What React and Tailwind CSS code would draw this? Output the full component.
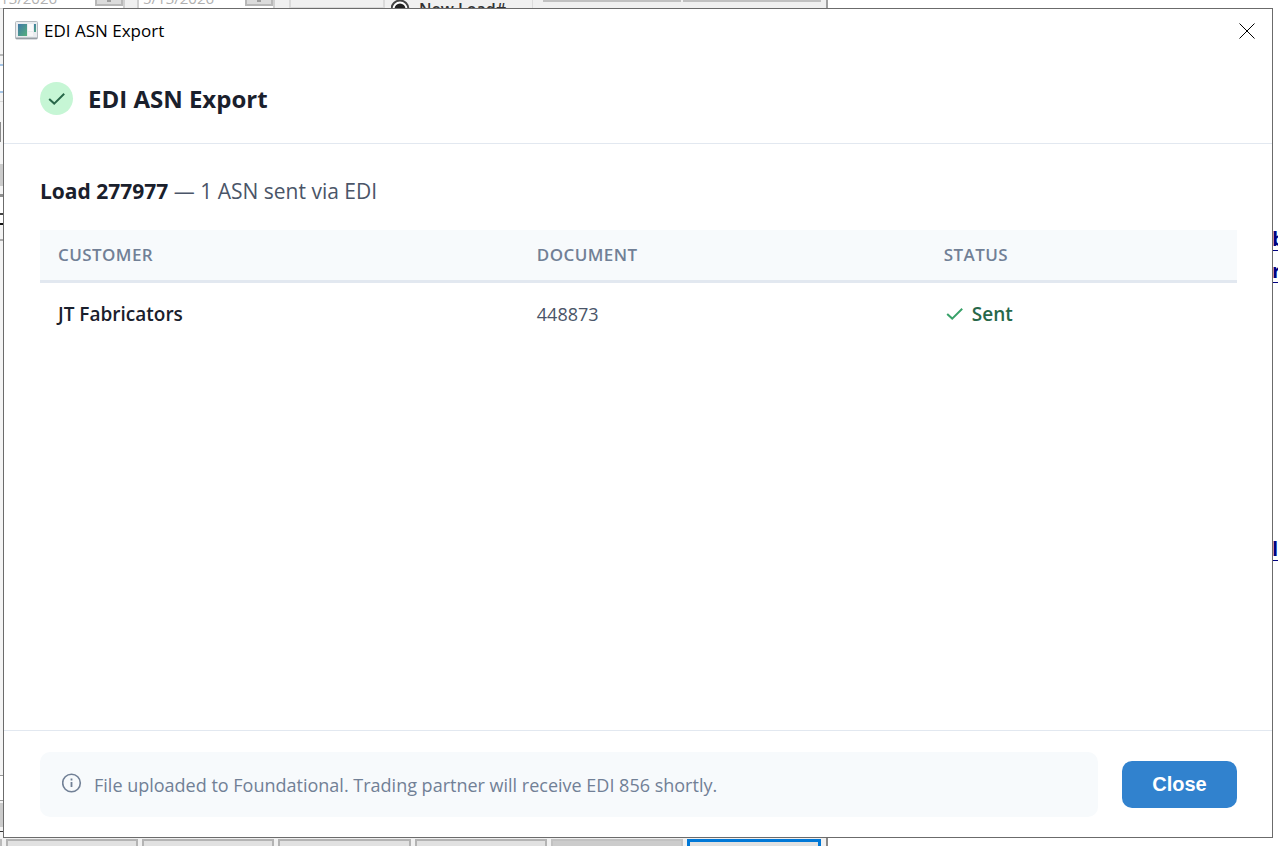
const rows = [{ customer: "JT Fabricators", document: "448873", status: "Sent" }];

function CheckIcon({ className }) {
  return (
    <svg className={className} viewBox="0 0 18 14" fill="none" stroke="currentColor" aria-hidden="true">
      <path d="M1.2 7 6.2 11.6 16.2 1.8" />
    </svg>
  );
}

function WindowIcon() {
  return (
    <svg className="h-5 w-6 shrink-0" viewBox="0 0 24 20" aria-hidden="true">
      <defs>
        <linearGradient id="pane" x1="0" y1="0" x2="1" y2="1">
          <stop offset="0" stopColor="#3f78a8" />
          <stop offset="1" stopColor="#55b07c" />
        </linearGradient>
      </defs>
      <rect x="0.5" y="0.5" width="22" height="17.5" rx="1" fill="#e9ecef" stroke="#b4babf" />
      <rect x="1" y="16.5" width="21" height="1.5" fill="#989fa5" />
      <rect x="3" y="3" width="9" height="12" fill="url(#pane)" />
      <rect x="13" y="3" width="5" height="7" fill="#fafafa" />
      <rect x="13" y="11" width="5" height="4" fill="#f6f6f6" />
      <rect x="19" y="3" width="2" height="8" fill="url(#pane)" />
    </svg>
  );
}

function DateField({ value, className }) {
  return (
    <div className={`flex h-[9px] shrink-0 items-start justify-between border-x-2 border-b border-[#d0d0d0] bg-white ${className}`}>
      <span className="-mt-3 pl-1 text-[15px] leading-5 text-[#b0b0b0]">{value}</span>
      <span className="flex h-1.5 w-7 items-start justify-center border-x-2 border-b-2 border-[#b8b8b8] bg-[#dcdcdc]">
        <span className="h-0.5 w-1 bg-[#a0a0a0]" />
      </span>
    </div>
  );
}

function ParentWindow() {
  return (
    <div className="absolute inset-0 flex flex-col overflow-hidden bg-white" aria-hidden="true">
      <div className="flex h-[9px] w-[828px] shrink-0 items-start overflow-hidden border-r-2 border-[#a0a0a0] bg-[#f0f0f0]">
        <DateField value="5/13/2026" className="-ml-5 w-[145px]" />
        <DateField value="5/13/2026" className="ml-3 w-[138px]" />
        <div className="ml-3.5 h-2 w-24 shrink-0 border-x-2 border-b border-[#dadada]" />
        <svg className="ml-1.5 h-[9px] w-5 shrink-0" viewBox="0 0 20 9">
          <circle cx="9" cy="9" r="8.5" fill="#fff" stroke="#444" strokeWidth="2" />
          <circle cx="9" cy="9" r="5.5" fill="#222" />
        </svg>
        <span className="ml-2 w-[114px] shrink-0 border-r border-[#dcdcdc] text-base leading-[18px] font-semibold text-[#333]">New Load#</span>
        <div className="ml-2.5 h-0.5 w-[138px] shrink-0 bg-[#c0c0c0]" />
        <div className="ml-0.5 h-0.5 w-[138px] shrink-0 bg-[#c0c0c0]" />
      </div>
      <div className="flex min-h-0 flex-1 justify-between">
        <div className="flex w-1 flex-col bg-[#f4f4f4]">
          <div className="mt-[45px] h-0.5 bg-[#b8b8b8]" />
          <div className="mt-2 h-[29px] border-y-2 border-[#a5c5e6] bg-white" />
          <div className="mt-2 h-px bg-[#d8d8d8]" />
          <div className="mt-5 h-5 w-px bg-[#8a8a8a]" />
          <div className="mt-[22px] h-[22px] bg-[#cbcbcb]" />
          <div className="mt-2 h-[3px] bg-[#8f8f8f]" />
          <div className="h-4 bg-white" />
          <div className="h-0.5 bg-[#444]" />
          <div className="h-2 bg-white" />
          <div className="h-0.5 bg-[#111]" />
          <div className="mt-3.5 h-0.5 bg-[#aaa]" />
          <div className="flex-1" />
          <div className="h-px bg-[#999]" />
          <div className="h-6 bg-white" />
          <div className="h-px bg-[#999]" />
          <div className="mt-0.5 h-6 bg-[#cbcbcb]" />
          <div className="mt-1 mb-1.5 h-px bg-[#333]" />
        </div>
        <div className="flex w-1.5 flex-col pt-[214px] text-xl leading-8 font-bold text-[#000080] underline decoration-1 underline-offset-4">
          <span className="h-8">b</span>
          <span className="h-8">r</span>
          <span className="mt-[246px] h-8">l</span>
        </div>
      </div>
      <div className="flex h-2 w-[828px] shrink-0 items-stretch gap-1 overflow-hidden border-r-2 border-[#888] bg-[#f0f0f0] pt-px pr-[5px]">
        <div className="w-0.5 bg-[#bbb]" />
        <div className="flex-1 border-2 border-b-0 border-[#b3b3b3] bg-[#e1e1e1]" />
        <div className="flex-1 border-2 border-b-0 border-[#b3b3b3] bg-[#e1e1e1]" />
        <div className="flex-1 border-2 border-b-0 border-[#b3b3b3] bg-[#e1e1e1]" />
        <div className="flex-1 border-2 border-b-0 border-[#b3b3b3] bg-[#e1e1e1]" />
        <div className="flex-1 border-2 border-b-0 border-[#c2c2c2] bg-[#cccccc]" />
        <div className="flex-1 border-3 border-b-0 border-[#0078d7] bg-[#e1e1e1]" />
      </div>
    </div>
  );
}

export default function App() {
  return (
    <div className="relative flex min-h-screen bg-white py-2 pr-[5px] pl-[3px] font-['Open_Sans','Noto_Sans',sans-serif]">
      <ParentWindow />
      <section role="dialog" aria-labelledby="dialog-title" className="relative flex min-w-0 flex-1 flex-col border border-[#6b6b6b] bg-white">
        <div className="flex h-[45px] shrink-0 items-center justify-between pr-[17px] pb-0.5 pl-[11px]">
          <div className="flex items-center gap-[5px]">
            <WindowIcon />
            <span className="text-[17px] leading-6 text-black">EDI ASN Export</span>
          </div>
          <button type="button" aria-label="Close window" className="text-black">
            <svg className="h-4 w-4" viewBox="0 0 16 16" fill="none" stroke="currentColor" strokeWidth="1" aria-hidden="true">
              <path d="M.5.5l15 15M15.5.5l-15 15" />
            </svg>
          </button>
        </div>

        <header className="flex items-center gap-[15px] border-b border-[#e2e8f0] px-9 py-7">
          <span className="flex h-[33px] w-[33px] items-center justify-center rounded-full bg-[#c6f6d5] text-[#276749]">
            <CheckIcon className="h-[14px] w-[18px] stroke-2" />
          </span>
          <h1 id="dialog-title" className="text-2xl leading-8 font-bold text-[#1a202c]">EDI ASN Export</h1>
        </header>

        <main className="flex-1 pt-8 pr-[35px] pl-9">
          <p className="text-[21px] leading-[30px] text-[#4a5568]">
            <strong className="font-bold text-[#1a202c]">Load 277977</strong> — 1 ASN sent via EDI
          </p>
          <table className="mt-6 w-full table-fixed border-separate border-spacing-0 text-left">
            <thead>
              <tr className="bg-[#f7fafc] text-[17px] leading-6 text-[#718096]">
                <th className="h-[53px] w-[40%] border-b-3 border-[#e2e8f0] px-[18px] font-semibold tracking-wide">CUSTOMER</th>
                <th className="w-[34%] border-b-3 border-[#e2e8f0] px-[18px] font-semibold tracking-wide">DOCUMENT</th>
                <th className="w-[26%] border-b-3 border-[#e2e8f0] px-[18px] font-semibold tracking-wide">STATUS</th>
              </tr>
            </thead>
            <tbody>
              {rows.map((row) => (
                <tr key={row.document} className="h-[62px] leading-7">
                  <td className="px-[18px] text-[19px] font-semibold text-[#1a202c]">{row.customer}</td>
                  <td className="px-[18px] text-lg text-[#4a5568]">{row.document}</td>
                  <td className="px-[18px] text-[19px]">
                    <span className="flex items-center gap-2 font-semibold text-[#276749]">
                      <CheckIcon className="ml-0.5 h-[14px] w-[18px] stroke-2 text-[#38a169]" />
                      {row.status}
                    </span>
                  </td>
                </tr>
              ))}
            </tbody>
          </table>
        </main>

        <footer className="flex items-center gap-6 border-t border-[#e2e8f0] pt-[21px] pr-[35px] pb-5 pl-9">
          <div className="flex min-h-[65px] flex-1 items-center gap-3 rounded-[10px] bg-[#f7fafc] px-[22px] text-[#718096]">
            <svg className="mb-1 h-5 w-5 shrink-0" viewBox="0 0 20 20" fill="none" stroke="currentColor" aria-hidden="true">
              <circle cx="9.5" cy="10" r="8.8" strokeWidth="1.6" />
              <path d="M9.5 9v5M9.5 5.6v1.8" strokeWidth="1.8" />
            </svg>
            <p className="text-lg leading-7">File uploaded to Foundational. Trading partner will receive EDI 856 shortly.</p>
          </div>
          <button type="button" className="h-[47px] w-[115px] rounded-[10px] bg-[#3182ce] pb-0.5 font-['Liberation_Sans',Arial,sans-serif] text-xl leading-6 font-bold text-white">
            Close
          </button>
        </footer>
      </section>
    </div>
  );
}
